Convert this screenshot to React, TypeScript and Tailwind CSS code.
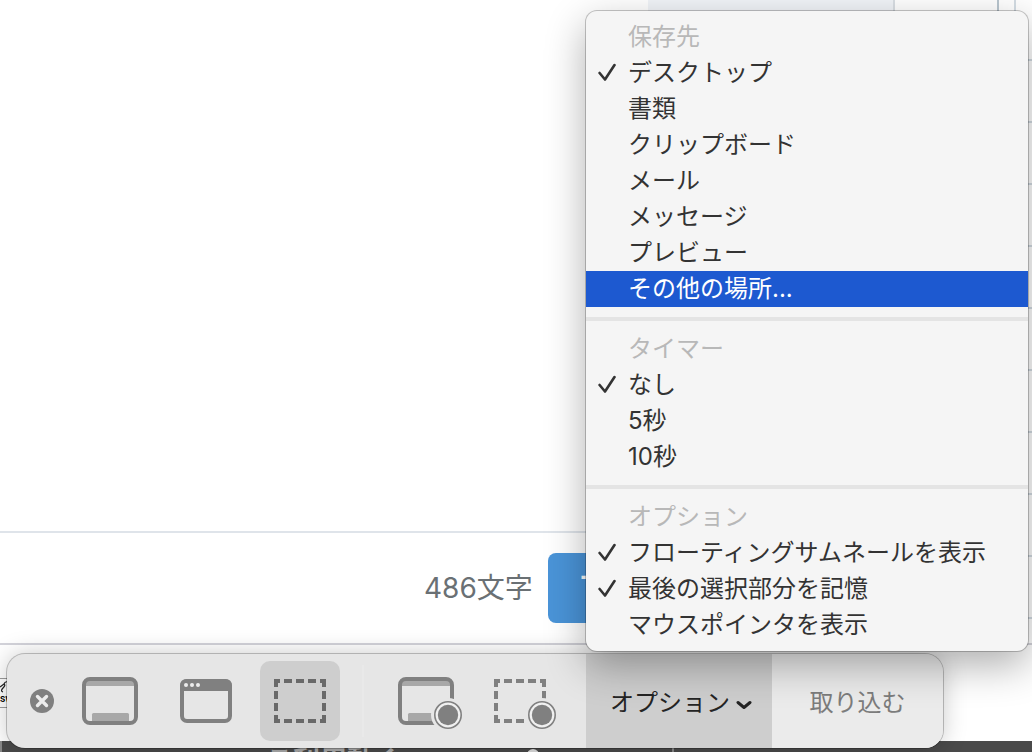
import React, { useState } from "react";
import clsx from "clsx";

type MenuItem = {
  id: string;
  label: string;
};

type MenuGroup = {
  title: string;
  items: MenuItem[];
};

const groups: MenuGroup[] = [
  {
    title: "保存先",
    items: [
      { id: "desktop", label: "デスクトップ" },
      { id: "documents", label: "書類" },
      { id: "clipboard", label: "クリップボード" },
      { id: "mail", label: "メール" },
      { id: "messages", label: "メッセージ" },
      { id: "preview", label: "プレビュー" },
      { id: "other", label: "その他の場所..." },
    ],
  },
  {
    title: "タイマー",
    items: [
      { id: "none", label: "なし" },
      { id: "five", label: "5秒" },
      { id: "ten", label: "10秒" },
    ],
  },
  {
    title: "オプション",
    items: [
      { id: "thumbnail", label: "フローティングサムネールを表示" },
      { id: "remember", label: "最後の選択部分を記憶" },
      { id: "pointer", label: "マウスポインタを表示" },
    ],
  },
];

const CheckIcon = () => (
  <svg viewBox="0 0 18 20" className="h-5 w-[18px]" fill="none" stroke="currentColor" strokeWidth="2.6" strokeLinecap="round" strokeLinejoin="round">
    <path d="M1.6 10 L7 16.5 L16.5 2" />
  </svg>
);

const CloseIcon = () => (
  <svg viewBox="0 0 24 24" className="h-6 w-6">
    <circle cx="12" cy="12" r="12" fill="#808080" />
    <path d="M7.5 7.5 L16.5 16.5 M16.5 7.5 L7.5 16.5" stroke="#ececec" strokeWidth="3.4" strokeLinecap="round" />
  </svg>
);

const ScreenFrame = () => (
  <>
    <rect x="16" y="20" width="48" height="5" fill="#a8a8a8" />
    <path d="M22 61 V53.5 Q22 52 23.5 52 H57.5 Q59 52 59 53.5 V61 Z" fill="#a8a8a8" />
    <rect x="14" y="18" width="52" height="44" rx="6" fill="none" stroke="#808080" strokeWidth="4" />
  </>
);

const RecordDot = ({ cx }: { cx: number }) => (
  <>
    <circle cx={cx} cy="54" r="17" fill="#e6e6e6" />
    <circle cx={cx} cy="54" r="13.2" fill="#f0f0f0" stroke="#808080" strokeWidth="1.6" />
    <circle cx={cx} cy="54" r="10.2" fill="#808080" />
  </>
);

const DashedFrame = () => (
  <path
    fill="none"
    stroke="currentColor"
    strokeWidth="4"
    d="M20 20H16V26 M24 20H32 M36 20H44 M48 20H56 M60 20H64V26 M64 30V38 M64 42V50 M64 54V60H60 M56 60H48 M44 60H36 M32 60H24 M20 60H16V54 M16 50V42 M16 38V30"
  />
);

const ScreenIcon = () => (
  <svg viewBox="0 0 80 80" className="h-20 w-20">
    <ScreenFrame />
  </svg>
);

const WindowIcon = () => (
  <svg viewBox="0 0 80 80" className="h-20 w-20">
    <rect x="17" y="20" width="48" height="40" rx="5" fill="none" stroke="#808080" strokeWidth="4" />
    <path d="M15 30 V25 Q15 18 22 18 H60 Q67 18 67 25 V30 Z" fill="#808080" />
    <g fill="#ececec">
      <circle cx="21" cy="24" r="2" />
      <circle cx="27" cy="24" r="2" />
      <circle cx="33" cy="24" r="2" />
    </g>
  </svg>
);

const SelectionIcon = () => (
  <svg viewBox="0 0 80 80" className="h-20 w-20 text-[#696969]">
    <DashedFrame />
  </svg>
);

const RecordScreenIcon = () => (
  <svg viewBox="0 0 80 80" className="h-20 w-20">
    <ScreenFrame />
    <RecordDot cx={62} />
  </svg>
);

const RecordSelectionIcon = () => (
  <svg viewBox="1 0 80 80" className="h-20 w-20 text-[#808080]">
    <DashedFrame />
    <RecordDot cx={62} />
  </svg>
);

const captureModes = [
  { id: "screen", label: "画面全体を取り込む", Icon: ScreenIcon },
  { id: "window", label: "選択したウインドウを取り込む", Icon: WindowIcon },
  { id: "selection", label: "選択部分を取り込む", Icon: SelectionIcon },
];

const recordModes = [
  { id: "record-screen", label: "画面全体を収録", Icon: RecordScreenIcon },
  { id: "record-selection", label: "選択部分を収録", Icon: RecordSelectionIcon },
];

const rows = [1, 2, 3, 4, 5, 6, 7, 8, 9];

const Page = () => (
  <>
    <div className="flex flex-1 border-b-2 border-[#d3d3da]">
      <main className="flex flex-1 flex-col">
        <div className="flex flex-1 justify-end">
          <div className="h-12 w-[245px] bg-[#f1f4f8]" />
        </div>
        <div className="flex h-28 items-center border-t-2 border-[#dfe4ea] pl-[424px]">
          <span className="w-[124px] text-[28px] text-[#6a7074]">486文字</span>
          <button className="h-[70px] rounded-lg bg-[#4a94d8] px-8 text-[28px] font-bold text-white">下書き</button>
        </div>
      </main>
      <div className="w-[106px] border-x-2 border-l-[#d9dee3] border-r-[#b9c6cf]" />
      <div className="ml-[15px] w-[18px] border-l-2 border-[#d3dce3]">
        <div className="h-[61px] border-b-2 border-[#d3dce3]" />
        {rows.map((row) => (
          <div key={row} className="h-[62px] border-b-2 border-[#d3dce3]" />
        ))}
      </div>
    </div>
    <div className="flex h-24 items-center">
      <div className="h-[30px] w-10 border-y border-[#9c9c9c] text-[8px] font-bold leading-3 text-black">
        <svg viewBox="0 0 8 14" className="h-[14px] w-2" fill="none" stroke="#222" strokeWidth="1.2">
          <path d="M0 8 L4 5 Q6 6 3 9 Q0 12 3 13 M4 5 Q5 2 8 3" />
        </svg>
        SW
      </div>
    </div>
    <div className="flex h-[11px] overflow-hidden border-l-2 border-[#8a8a8a] bg-[#4a4a4a] pl-[264px]">
      <span className="pt-1 text-[27px] font-bold leading-8 text-[#aaa]">こ利用動く</span>
      <span className="ml-[126px] mt-2 h-3 w-3 rounded-full bg-[#ddd]" />
      <span className="ml-[133px] w-[2px] bg-[#888]" />
    </div>
  </>
);

const App: React.FC = () => {
  const [isOpen, setIsOpen] = useState(true);
  const [mode, setMode] = useState("selection");
  const [active, setActive] = useState("other");
  const [checked, setChecked] = useState(["desktop", "none", "thumbnail", "remember"]);

  const handleSelect = (group: MenuGroup, item: MenuItem) => () => {
    if (group.title === "オプション") {
      setChecked((prev) => (prev.includes(item.id) ? prev.filter((id) => id !== item.id) : [...prev, item.id]));
    } else {
      setChecked((prev) => [...prev.filter((id) => !group.items.some((other) => other.id === id)), item.id]);
    }
  };

  const renderMode = ({ id, label, Icon }: (typeof captureModes)[number]) => (
    <button
      key={id}
      aria-label={label}
      onClick={() => setMode(id)}
      className={clsx("h-20 w-20 rounded-[10px]", mode === id && "bg-[#cecece]")}
    >
      <Icon />
    </button>
  );

  return (
    <div
      lang="ja"
      className="relative flex min-h-screen flex-col overflow-hidden bg-white font-['Inter','Noto_Sans_CJK_JP',sans-serif]"
    >
      <Page />

      <div className="absolute bottom-1 left-[7px] flex h-[94px] rounded-[18px] bg-[#e6e6e6] shadow-[0_0_0_1px_rgba(0,0,0,0.22),0_0_24px_rgba(0,0,0,0.22)]">
        <div className="flex items-center pl-[23px] pr-[25px]">
          <button aria-label="閉じる" className="mr-4">
            <CloseIcon />
          </button>
          <div className="flex gap-[15px]">{captureModes.map(renderMode)}</div>
          <div className="mx-[22px] h-[72px] w-[2px] bg-[#e9e9e9]" />
          <div className="flex gap-[15px]">{recordModes.map(renderMode)}</div>
        </div>

        <div className="relative flex">
          <button
            aria-expanded={isOpen}
            onClick={() => setIsOpen(!isOpen)}
            className="flex w-[186px] items-center gap-[6px] bg-[#cecece] pl-6 pt-1 text-2xl text-[#242424]"
          >
            オプション
            <svg viewBox="0 0 16 10" className="mt-1 h-[10px] w-4" fill="none" stroke="currentColor" strokeWidth="3" strokeLinecap="round" strokeLinejoin="round">
              <path d="M2 2.5 L8 7.5 L14 2.5" />
            </svg>
          </button>

          {isOpen && (
            <div
              role="menu"
              className="absolute bottom-full left-0 z-10 mb-[3px] w-[442px] rounded-[11px] bg-[#f5f5f5] py-2 text-2xl text-[#333] shadow-[0_0_0_1px_rgba(0,0,0,0.22),0_14px_40px_rgba(0,0,0,0.32)]"
            >
              {groups.map((group, index) => (
                <div key={group.title} role="group" aria-label={group.title}>
                  {index > 0 && <div className="my-[10px] h-1 bg-[#e4e4e4]" />}
                  <div className="flex h-9 items-center pl-[42px] text-[#b8b8b8]">{group.title}</div>
                  {group.items.map((item) => (
                    <button
                      key={item.id}
                      role="menuitemcheckbox"
                      aria-checked={checked.includes(item.id)}
                      onMouseEnter={() => setActive(item.id)}
                      onClick={handleSelect(group, item)}
                      className={clsx("flex h-9 w-full items-center pb-px pl-3", active === item.id && "bg-[#1d59d0] text-white")}
                    >
                      <span className="w-[30px]">{checked.includes(item.id) && <CheckIcon />}</span>
                      {item.label}
                    </button>
                  ))}
                </div>
              ))}
            </div>
          )}
        </div>

        <button className="w-[171px] rounded-r-[18px] bg-[#ebebeb] pt-1 text-2xl text-[#7c7c7c]">取り込む</button>
      </div>
    </div>
  );
};

export default App;
